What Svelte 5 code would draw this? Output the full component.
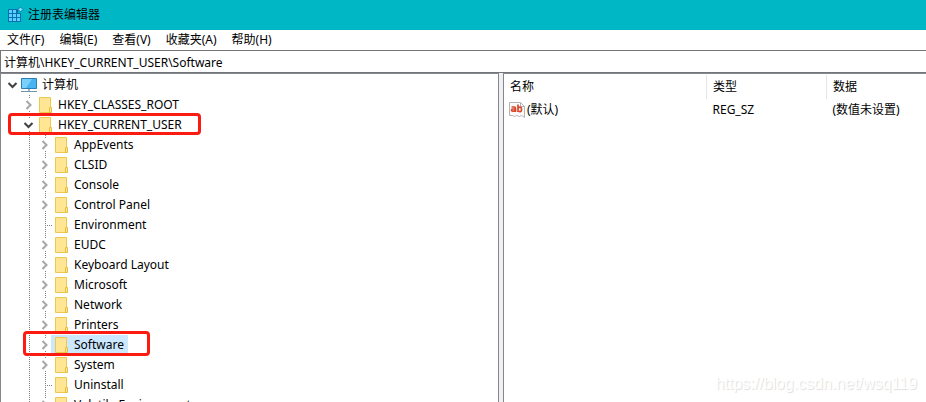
<script>
  const menus = ['文件(F)', '编辑(E)', '查看(V)', '收藏夹(A)', '帮助(H)'];

  // level, name, whether the key has subkeys
  const keys = [
    { level: 0, name: '计算机', children: true, open: true },
    { level: 1, name: 'HKEY_CLASSES_ROOT', children: true },
    { level: 1, name: 'HKEY_CURRENT_USER', children: true, open: true, mark: 'wide' },
    { level: 2, name: 'AppEvents', children: true },
    { level: 2, name: 'CLSID', children: true },
    { level: 2, name: 'Console', children: true },
    { level: 2, name: 'Control Panel', children: true },
    { level: 2, name: 'Environment' },
    { level: 2, name: 'EUDC', children: true },
    { level: 2, name: 'Keyboard Layout', children: true },
    { level: 2, name: 'Microsoft', children: true },
    { level: 2, name: 'Network', children: true },
    { level: 2, name: 'Printers', children: true },
    { level: 2, name: 'Software', children: true, mark: 'narrow' },
    { level: 2, name: 'System', children: true },
    { level: 2, name: 'Uninstall' },
    { level: 2, name: 'Volatile Environment', children: true }
  ];

  const values = [{ name: '(默认)', type: 'REG_SZ', data: '(数值未设置)' }];

  let selected = $state('Software');
  let path = $state('计算机\\HKEY_CURRENT_USER\\Software');

  function select(key) {
    selected = key.name;
    if (key.level === 0) path = key.name;
    else if (key.level === 1) path = '计算机\\' + key.name;
    else path = '计算机\\HKEY_CURRENT_USER\\' + key.name;
  }
</script>

<div class="window">
  <header class="titlebar">
    <svg width="16" height="16" viewBox="0 0 16 16" aria-hidden="true">
      <path d="M0 2h10v4h3v9H0z" fill="#0a70b0" />
      <path d="M1 3h3v3H1zM5 3h3v3H5zM1 7h3v3H1zM5 7h3v3H5zM9 7h3v3H9zM1 11h3v3H1zM5 11h3v3H5zM9 11h3v3H9z" fill="#5cd0ff" />
      <path d="M12.5 0l2.500 2.500-2.500 2.500-2.500-2.500z" fill="#8be0ff" stroke="#0878b8" />
    </svg>
    <span>注册表编辑器</span>
  </header>

  <nav class="menubar">
    {#each menus as menu}
      <button>{menu}</button>
    {/each}
  </nav>

  <input class="address" aria-label="地址" bind:value={path} />

  <main class="panes">
    <ul class="tree">
      {#each keys as key}
        <li>
          {#if key.level > 0}
            <span class="cell"></span>
          {/if}
          {#if key.level > 1}
            <span class="cell line"></span>
          {/if}
          {#if key.children}
            <button class="cell toggle" class:line={key.level > 0} aria-label="展开 {key.name}">
              <svg width="11" height="12" viewBox="0 0 11 12">
                {#if key.open}
                  <path d="M1.5 4l4 4 4-4" fill="none" stroke="#404040" stroke-width="2" />
                {:else}
                  <path d="M3.5 2l4 4-4 4" fill="none" stroke="#a6a6a6" stroke-width="2" />
                {/if}
              </svg>
            </button>
          {:else}
            <span class="cell line leaf"></span>
          {/if}
          <button class="key" class:selected={selected === key.name} onclick={() => select(key)}>
            {#if key.level === 0}
              <svg width="16" height="16" viewBox="0 0 16 16">
                <path d="M0.5 1.5h15v10h-15z" fill="#48b4f2" stroke="#2b7fb5" />
                <path d="M1 2h10L5 11H1z" fill="#7bd0fb" />
                <path d="M7 12h2v2H7z" fill="#9fb4c0" />
                <path d="M0 14h16v1H0z" fill="#6d95ab" />
              </svg>
            {:else}
              <svg width="16" height="16" viewBox="0 0 16 16">
                <path d="M2.5 0.5h11v15h-11z" fill="#ffe594" stroke="#ecc850" />
                <path d="M12.5 10.5h2v5h-2z" fill="#ffe594" stroke="#e8c040" />
              </svg>
            {/if}
            <span>{key.name}</span>
          </button>
          {#if key.mark}
            <span class="mark {key.mark}"></span>
          {/if}
        </li>
      {/each}
    </ul>

    <div class="splitter"></div>

    <div class="values">
      <table>
        <thead>
          <tr>
            <th class="name">名称</th>
            <th class="type">类型</th>
            <th>数据</th>
          </tr>
        </thead>
        <tbody>
          {#each values as value}
            <tr>
              <td>
                <div class="value-name">
                  <svg width="16" height="16" viewBox="0 0 16 16" aria-hidden="true">
                    <path d="M0.5 0.5h11l4 4v11l-3-2-2 1-3-1-2 1-2-1-3 0z" fill="#fafafa" stroke="#b4b4b4" />
                    <path d="M11.5 0.5v4h4" fill="none" stroke="#b4b4b4" />
                    <path d="M2.500 5h2.500q1.500 0 1.500 1.500V10M6 7H4q-1.500 0-1.500 1T4 9.200q1.800 0 2.400-1.400M9 2.500V10M9 5.800q3.500-2 3.500 1.600T9 9" fill="none" stroke="#d9482b" stroke-width="1.700" />
                  </svg>
                  <span>{value.name}</span>
                </div>
              </td>
              <td>{value.type}</td>
              <td>{value.data}</td>
            </tr>
          {/each}
        </tbody>
      </table>
    </div>
  </main>

  <span class="watermark">https://blog.csdn.net/wsq119</span>
</div>

<style>
  :global(body) {
    margin: 0;
  }

  .window {
    position: relative;
    display: flex;
    flex-direction: column;
    height: 100vh;
    overflow: hidden;
    background: #fff;
    color: #000;
    font: 12px/20px "Noto Sans", "Noto Sans CJK SC", sans-serif;
  }

  button,
  input {
    margin: 0;
    border: 0;
    padding: 0;
    background: none;
    color: inherit;
    font: inherit;
  }

  svg {
    display: block;
    flex: none;
  }

  .titlebar {
    display: flex;
    align-items: center;
    gap: 4px;
    flex: none;
    height: 30px;
    padding-left: 8px;
    background: #00b7c6;
  }

  .menubar {
    display: flex;
    flex: none;
    gap: 15px;
    height: 20px;
    padding-left: 7px;
  }

  .address {
    flex: none;
    box-sizing: border-box;
    width: 100%;
    height: 23px;
    padding: 0 3px;
    border: 1px solid #76767a;
    border-right: 0;
    outline: none;
  }

  .panes {
    display: grid;
    grid-template-columns: 499fr 4px 423fr;
    flex: 1;
    min-height: 0;
  }

  .tree {
    margin: 0;
    padding: 1px 0 0 2px;
    border: 1px solid #828790;
    border-bottom: 0;
    list-style: none;
    overflow: hidden;
  }

  .tree li {
    position: relative;
    display: flex;
    height: 20px;
  }

  .cell {
    position: relative;
    flex: none;
    width: 16px;
    height: 20px;
  }

  .line {
    background: repeating-linear-gradient(#808080 0 1px, transparent 1px 2px) 10px 0 / 1px 100% no-repeat;
  }

  .leaf::after {
    content: "";
    position: absolute;
    top: 10px;
    left: 10px;
    width: 7px;
    height: 1px;
    background: repeating-linear-gradient(90deg, #808080 0 1px, transparent 1px 2px);
  }

  .toggle svg {
    margin: 0 0 0 4px;
    background: #fff;
  }

  .key {
    display: flex;
    align-items: center;
    gap: 5px;
    padding: 0 4px 0 2px;
    white-space: nowrap;
  }

  .selected {
    background: #cce8ff;
  }

  .mark {
    position: absolute;
    box-sizing: border-box;
    border: 3px solid #fb1b10;
    border-radius: 4px;
    pointer-events: none;
  }

  .wide {
    top: -2px;
    left: 5px;
    width: 193px;
    height: 22px;
  }

  .narrow {
    top: -4px;
    left: 20px;
    width: 127px;
    height: 25px;
  }

  .splitter {
    background: #f0f0f0;
  }

  .values {
    border: 1px solid #828790;
    border-width: 1px 0 0 1px;
    padding-top: 1px;
    overflow: hidden;
  }

  table {
    width: 100%;
    border-collapse: collapse;
    table-layout: fixed;
  }

  th,
  td {
    padding: 0 6px;
    text-align: left;
    font-weight: normal;
  }

  th {
    height: 24px;
    border-right: 1px solid #e5e5e5;
  }

  th:last-child {
    border-right: 0;
  }

  .name {
    width: 190px;
  }

  .type {
    width: 107px;
  }

  td {
    height: 22px;
  }

  .value-name {
    display: flex;
    align-items: center;
    gap: 2px;
    margin-left: -1px;
  }

  .watermark {
    position: absolute;
    right: 9px;
    bottom: 8px;
    color: #fff;
    font: 16px/20px "Liberation Sans", Arial, sans-serif;
    text-shadow: 1px 1px 1px #ddd;
  }
</style>
